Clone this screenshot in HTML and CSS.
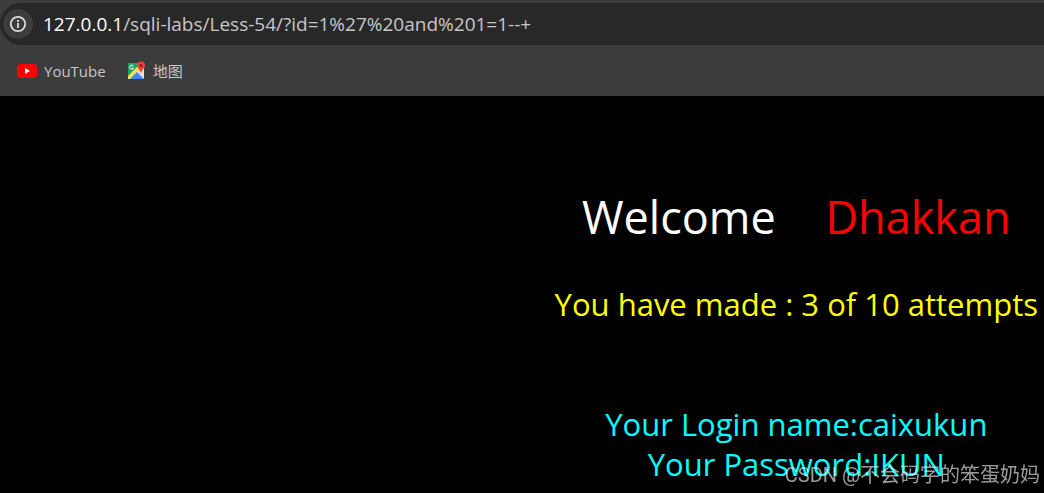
FILE: index.html
```html
<!DOCTYPE html>
<html lang="en">
<head>
    <meta charset="UTF-8">
    <meta name="viewport" content="width=device-width, initial-scale=1.0">
    <title>Less-54</title>
    <link rel="stylesheet" href="styles.css">
</head>
<body>
    <header class="toolbar">
        <form class="address-bar">
            <button type="button" class="site-info" aria-label="Site information">
                <svg width="18" height="18" viewBox="0 0 18 18" fill="none" stroke="#dcdcdc" stroke-width="1.800">
                    <circle cx="9" cy="9" r="7.2"/>
                    <path d="M9 8v5M9 5v2"/>
                </svg>
            </button>
            <label class="host" for="path">127.0.0.1</label>
            <input class="path" id="path" type="text" value="/sqli-labs/Less-54/?id=1%27%20and%201=1--+" spellcheck="false">
        </form>
        <nav class="bookmarks">
            <a class="bookmark" href="#">
                <svg width="20" height="20" viewBox="0 0 20 20">
                    <rect y="3" width="20" height="14" rx="4" fill="#f00"/>
                    <path d="M8 7l5 3-5 3z" fill="#fff"/>
                </svg>
                <span>YouTube</span>
            </a>
            <a class="bookmark" href="#">
                <svg width="20" height="20" viewBox="0 0 20 20">
                    <path d="M2 2h16v16H2z" fill="#e4e4e4"/>
                    <path d="M2 2h13L2 16z" fill="#1fa463"/>
                    <path d="M2 15L14 3l3 3L5 18H2z" fill="#fddc4f"/>
                    <path d="M4 18l7-7 7 7z" fill="#4285f4"/>
                    <path d="M11 10l7 7V6z" fill="#e4e4e4"/>
                    <path d="M7.5 5.2A2 2 0 1 0 7.6 7H6" fill="none" stroke="#fff"/>
                    <path d="M15 0.5a4 4 0 0 1 4 4c0 3-3.300 3.500-4 8.500-.700-5-4-5.500-4-8.500a4 4 0 0 1 4-4z" fill="#ea4335"/>
                    <circle cx="15" cy="4.500" r="1.500" fill="#7b231c"/>
                </svg>
                <span>地图</span>
            </a>
        </nav>
    </header>
    <main>
        <div class="content">
            <h1 class="welcome">Welcome <span class="name">Dhakkan</span></h1>
            <p class="attempts">You have made : 3 of 10 attempts</p>
            <p class="login">Your Login name:caixukun<br>Your Password:IKUN</p>
        </div>
    </main>
    <div class="watermark">CSDN @不会码字的笨蛋奶妈</div>
</body>
</html>
```

FILE: styles.css
```css
body {
    margin: 0;
    background-color: #000;
    font-family: "Open Sans", "Noto Sans CJK SC", sans-serif;
    overflow: hidden;
}
.toolbar {
    background-color: #3c3c3c;
    padding-top: 3px;
}
.address-bar {
    display: flex;
    align-items: center;
    height: 42px;
    padding-left: 3px;
    background-color: #282828;
    border-radius: 21px 0 0 21px;
    font-size: 19px;
}
.site-info {
    display: flex;
    align-items: center;
    justify-content: center;
    width: 30px;
    height: 30px;
    margin-right: 10px;
    padding: 0;
    border: 0;
    border-radius: 50%;
    background-color: #3c3c3c;
}
.host {
    color: #fff;
}
.path {
    flex: 1;
    min-width: 0;
    padding: 0;
    border: 0;
    outline: 0;
    background: none;
    color: #c7c7c7;
    font: inherit;
}
.bookmarks {
    display: flex;
    align-items: center;
    gap: 20px;
    height: 51px;
    padding-left: 17px;
}
.bookmark {
    display: flex;
    align-items: center;
    gap: 7px;
    color: #c7c7c7;
    font-size: 15px;
    text-decoration: none;
}
main {
    display: flex;
    justify-content: flex-end;
    padding: 88px 6px 0;
}
.content {
    text-align: center;
}
.welcome {
    margin: 0;
    color: #fff;
    font-size: 45px;
    font-weight: normal;
    line-height: 66px;
}
.name {
    margin-left: 38px;
    color: #f00;
}
.attempts {
    margin: 34px 0 80px;
    color: #ff0;
    font-size: 31px;
    line-height: 40px;
}
.login {
    margin: 0;
    color: #0ff;
    font-size: 31px;
    line-height: 40px;
}
.watermark {
    position: fixed;
    right: 4px;
    bottom: 4px;
    color: rgba(255, 255, 255, 0.6);
    font-family: Roboto, "Noto Sans CJK SC", sans-serif;
    font-size: 20px;
    line-height: 28px;
}
```
